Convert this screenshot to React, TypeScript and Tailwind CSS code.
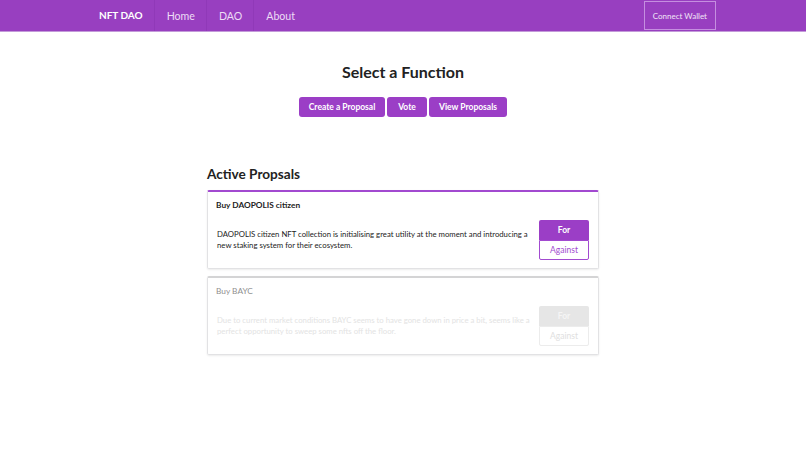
import React from "react";

type Proposal = {
  title: string;
  body: string;
  active: boolean;
};

const proposals: Proposal[] = [
  {
    title: "Buy DAOPOLIS citizen",
    body: "DAOPOLIS citizen NFT collection is initialising great utility at the moment and introducing a new staking system for their ecosystem.",
    active: true,
  },
  {
    title: "Buy BAYC",
    body: "Due to current market conditions BAYC seems to have gone down in price a bit, seems like a perfect opportunity to sweep some nfts off the floor.",
    active: false,
  },
];

function NavBar() {
  return (
    <div className="h-8 bg-[#983fc0] border-b border-[#c39ad9]">
      <div className="mx-auto flex h-full w-[626px] items-stretch">
        <div className="flex items-center pl-[9px] pr-[11px] text-[10px] font-bold text-white">NFT DAO</div>
        <div className="flex items-center border-l border-[#9039b8] pl-3 pr-[11px] pt-[2px] text-[10.6px] text-[#eddcf5]">Home</div>
        <div className="flex items-center border-l border-[#9039b8] pl-3 pr-[11px] pt-[2px] text-[10.6px] text-[#eddcf5]">DAO</div>
        <div className="flex items-center border-l border-[#9039b8] pl-3 pr-[11px] pt-[2px] text-[10.6px] text-[#eddcf5]">About</div>
        <div className="ml-auto my-[1px] flex items-center border border-[#c58fe0] px-[8px] text-[8px] text-[#f1e4f7]">
          Connect Wallet
        </div>
      </div>
    </div>
  );
}

function ProposalCard({ p }: { p: Proposal }) {
  return (
    <div
      className={
        "rounded-[2px] border border-[#e2e2e4] shadow-[0_1px_2px_rgba(0,0,0,0.08)] " +
        (p.active ? "border-t-2 border-t-[#a24ad0]" : "border-t-2 border-t-[#d4d4d5]")
      }
    >
      <div
        className={
          "px-2 pt-[7px] text-[8.3px] leading-[12px] " +
          (p.active ? "font-bold text-[#222]" : "text-[#8f8f8f]")
        }
      >
        {p.title}
      </div>
      <div className="flex items-center gap-[8px] pl-[9px] pr-[9px] pt-[9px] pb-[8px]">
        <p
          className={
            "flex-1 text-[7.75px] leading-[11px] " + (p.active ? "text-[#222]" : "text-[#e3e3e3]")
          }
        >
          {p.body}
        </p>
        <div className="flex w-[50px] flex-col">
          <button
            className={
              "h-5 rounded-t-[2px] text-[8.5px] font-bold " +
              (p.active ? "bg-[#9b3ec6] text-white" : "bg-[#e6e6e6] text-[#f5f5f5]")
            }
          >
            For
          </button>
          <button
            className={
              "h-5 rounded-b-[2px] border bg-white text-[8.5px] " +
              (p.active ? "border-[#a24ad0] text-[#a24ad0]" : "border-[#ececec] text-[#e0e0e0]")
            }
          >
            Against
          </button>
        </div>
      </div>
    </div>
  );
}

export default function App() {
  return (
    <div className="min-h-[460px] bg-white" style={{ fontFamily: "Lato, 'Open Sans', sans-serif" }}>
      <NavBar />
      <div className="flex flex-col items-center">
        <h1 className="mt-[29px] text-[16px] font-bold leading-[22px] text-[#222]">Select a Function</h1>
        <div className="mt-[14px] flex gap-[2px]">
          <button className="h-5 w-[86px] rounded-[3px] bg-[#9b3ec6] text-[8.5px] font-bold text-white">
            Create a Proposal
          </button>
          <button className="h-5 w-10 rounded-[3px] bg-[#9b3ec6] text-[8.5px] font-bold text-white">Vote</button>
          <button className="h-5 w-[78px] rounded-[3px] bg-[#9b3ec6] text-[8.5px] font-bold text-white">
            View Proposals
          </button>
        </div>
      </div>
      <div className="mx-auto mt-[47px] w-[392px]">
        <h2 className="text-[13.6px] font-bold leading-[20px] text-[#222]">Active Propsals</h2>
        <div className="mt-[6px] flex flex-col gap-[7px]">
          {proposals.map((p) => (
            <ProposalCard key={p.title} p={p} />
          ))}
        </div>
      </div>
    </div>
  );
}
